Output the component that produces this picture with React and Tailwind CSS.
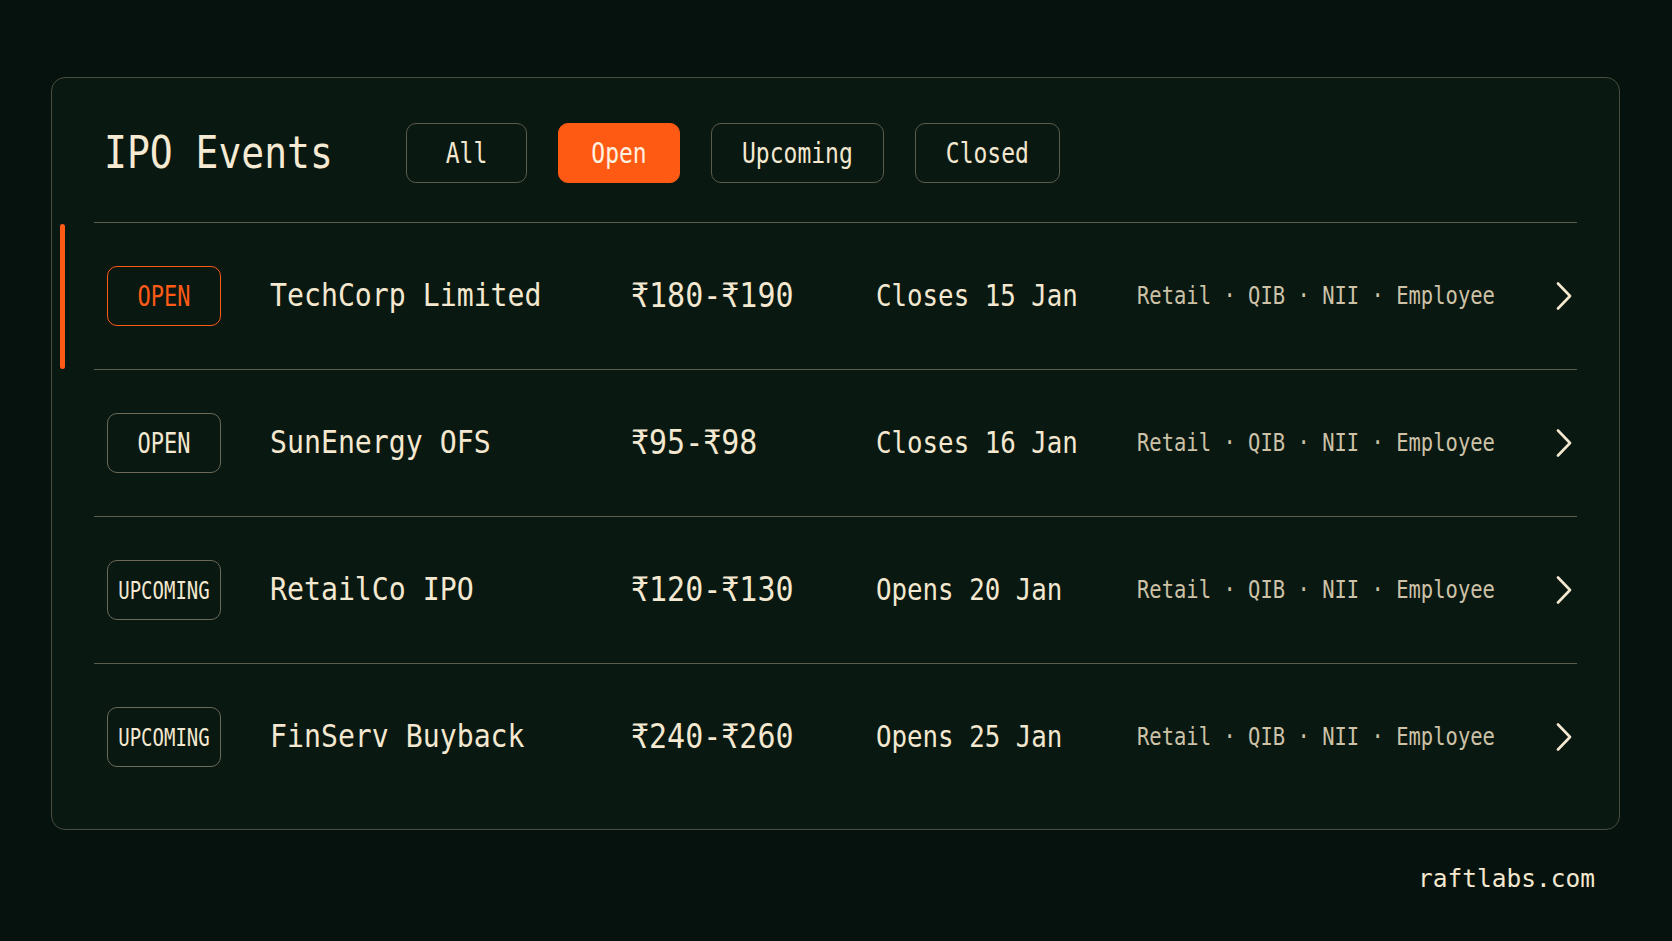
import { useState } from 'react';

const events = [
  { status: 'OPEN', name: 'TechCorp Limited', price: '₹180-₹190', date: 'Closes 15 Jan', active: true },
  { status: 'OPEN', name: 'SunEnergy OFS', price: '₹95-₹98', date: 'Closes 16 Jan' },
  { status: 'UPCOMING', name: 'RetailCo IPO', price: '₹120-₹130', date: 'Opens 20 Jan' },
  { status: 'UPCOMING', name: 'FinServ Buyback', price: '₹240-₹260', date: 'Opens 25 Jan' },
];

const filters = ['All', 'Open', 'Upcoming', 'Closed'];

function Chevron() {
  return (
    <svg width="18" height="28" viewBox="0 0 18 28" fill="none">
      <path d="M3 1.5 L15 14 L3 26.5" stroke="#f4e8d0" strokeWidth="2.6" strokeLinecap="round" strokeLinejoin="round" />
    </svg>
  );
}

function StatusBadge({ status, active }) {
  if (active) {
    return (
      <div className="w-[114px] h-[60px] rounded-[10px] border-[1.5px] border-[#ff5b16] flex items-center justify-center text-[22px] text-[#ff5b16]">
        <span className="inline-block scale-y-[1.25]">{status}</span>
      </div>
    );
  }
  if (status === 'UPCOMING') {
    return (
      <div className="w-[114px] h-[60px] rounded-[10px] border-[1.5px] border-[#6d6a58] flex items-center justify-center text-[19px] text-[#f4e8d0]">
        <span className="inline-block scale-y-[1.32]">{status}</span>
      </div>
    );
  }
  return (
    <div className="w-[114px] h-[60px] rounded-[10px] border-[1.5px] border-[#6d6a58] flex items-center justify-center text-[22px] text-[#f4e8d0]">
      <span className="inline-block scale-y-[1.25]">{status}</span>
    </div>
  );
}

export default function App() {
  const [filter, setFilter] = useState('Open');

  return (
    <div className="w-[1672px] h-[941px] overflow-hidden bg-[#06120d] pt-[77px] pl-[51px] font-['DejaVu_Sans_Mono',monospace] text-[#f4e8d0]">
      <div className="w-[1569px] rounded-[14px] border border-[#4a4c40] bg-[#0a1812] px-[42px] pt-[45px] pb-[19px]">
        <div className="flex items-center h-[60px] pl-[10px]">
          <h1 className="text-[38px] leading-none text-[#f6ead3] w-[302px] scale-y-[1.18] origin-left">IPO Events</h1>
          <div className="flex gap-[31px]">
            {filters.map((f) => (
              <button
                key={f}
                onClick={() => setFilter(f)}
                className={
                  f === filter
                    ? 'h-[60px] min-w-[122px] px-[30px] rounded-[10px] bg-[#ff5a14] border-[1.5px] border-[#ff5a14] text-[23px] text-[#fff1e0]'
                    : 'h-[60px] min-w-[121px] px-[30px] rounded-[10px] border-[1.5px] border-[#5c5b4c] text-[23px] text-[#f4e8d0]'
                }
              >
                <span className="inline-block scale-y-[1.2]">{f}</span>
              </button>
            ))}
          </div>
        </div>

        <div className="mt-[39px]">
          {events.map((e, i) => (
            <div key={i} className="relative h-[147px] border-t border-[#5e5d4e] flex items-center pl-[13px] pr-[4px]">
              {e.active && <div className="absolute left-[-34px] top-[1px] bottom-[0px] w-[5px] rounded-full bg-[#ff5b16]" />}
              <div className="w-[163px]">
                <StatusBadge status={e.status} active={e.active} />
              </div>
              <div className="w-[361px] text-[28.2px] leading-none scale-y-[1.16] origin-left">{e.name}</div>
              <div className="w-[245px] text-[30px] leading-none scale-y-[1.12] origin-left">{e.price}</div>
              <div className="w-[261px] text-[25.8px] leading-none scale-y-[1.2] origin-left">{e.date}</div>
              <div className="flex-1 text-[20.5px] leading-none text-[#cdc2a7] scale-y-[1.2] origin-left">Retail · QIB · NII · Employee</div>
              <Chevron />
            </div>
          ))}
        </div>
      </div>
      <div className="w-[1569px] flex justify-end pr-[25px] mt-[37px]">
        <span className="text-[24.5px] leading-none text-[#f4e8d0]">raftlabs.com</span>
      </div>
    </div>
  );
}
